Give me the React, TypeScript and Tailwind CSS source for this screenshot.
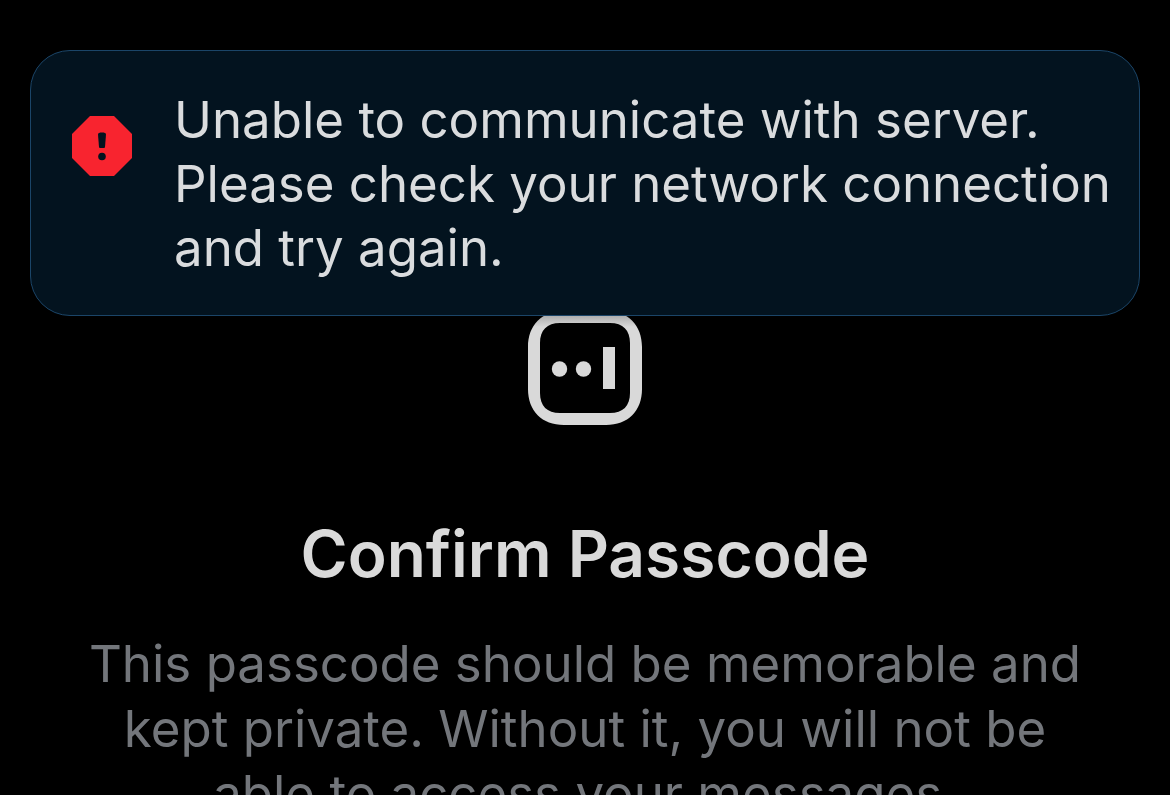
import { useId } from "react";

function AlertIcon() {
  return (
    <svg viewBox="0 0 60 60" className="w-[60px] h-[60px] shrink-0" aria-hidden="true">
      <path d="M18 0H42L60 18V42L42 60H18L0 42V18Z" fill="#f8242f" />
      <path
        d="M26 18.5C26 17 27.5 16.5 30 16.5S34 17 34 18.5L33 31Q32.900 32 32 32H28Q27.100 32 27 31Z"
        fill="#03131f"
      />
      <circle cx="30" cy="40.500" r="3.800" fill="#03131f" />
    </svg>
  );
}

function PasscodeIcon() {
  const shadeId = useId();

  return (
    <svg viewBox="0 0 114 114" className="w-[114px] h-[114px]" aria-hidden="true">
      <defs>
        <linearGradient id={shadeId} x1="0" y1="0" x2="0" y2="1">
          <stop offset="0.03" stopColor="#a8a8a8" />
          <stop offset="0.14" stopColor="#d9d9d9" />
        </linearGradient>
      </defs>
      <path
        d="M36 0H78C100 0 114 14 114 36V78C114 100 100 114 78 114H36C14 114 0 100 0 78V36C0 14 14 0 36 0ZM32 12C19 12 12 19 12 32V82C12 95 19 102 32 102H82C95 102 102 95 102 82V32C102 19 95 12 82 12Z"
        fill={`url(#${shadeId})`}
        fillRule="evenodd"
      />
      <circle cx="31.500" cy="58" r="7.700" fill="#d9d9d9" />
      <circle cx="55.500" cy="58" r="7.700" fill="#d9d9d9" />
      <path d="M75 36H87V78H75Z" fill="#d9d9d9" />
    </svg>
  );
}

function ErrorToast() {
  return (
    <div
      role="alert"
      className="absolute inset-x-[30px] top-[50px] flex items-start gap-[42px] rounded-[40px] border border-[#1b4568] bg-[#03131f] pt-[37px] pb-[35px] pl-[41px] pr-6"
    >
      <div className="pt-7">
        <AlertIcon />
      </div>
      <p className="text-[51px] leading-[64px] text-[#dadcde]">
        Unable to communicate with server. Please check your network connection and try again.
      </p>
    </div>
  );
}

export default function App() {
  return (
    <div className="relative h-screen overflow-hidden bg-black font-['Inter',sans-serif]">
      <main className="flex flex-col items-center px-[72px] pt-[311px] text-center">
        <PasscodeIcon />
        <h1 className="mt-[89px] text-[64px] leading-[80px] font-semibold text-[#dadada]">
          Confirm Passcode
        </h1>
        <p className="mt-[37px] text-[51px] leading-[65px] text-[#73767b]">
          This passcode should be memorable and kept private. Without it, you will not be able to
          access your messages.
        </p>
      </main>

      <ErrorToast />
    </div>
  );
}
